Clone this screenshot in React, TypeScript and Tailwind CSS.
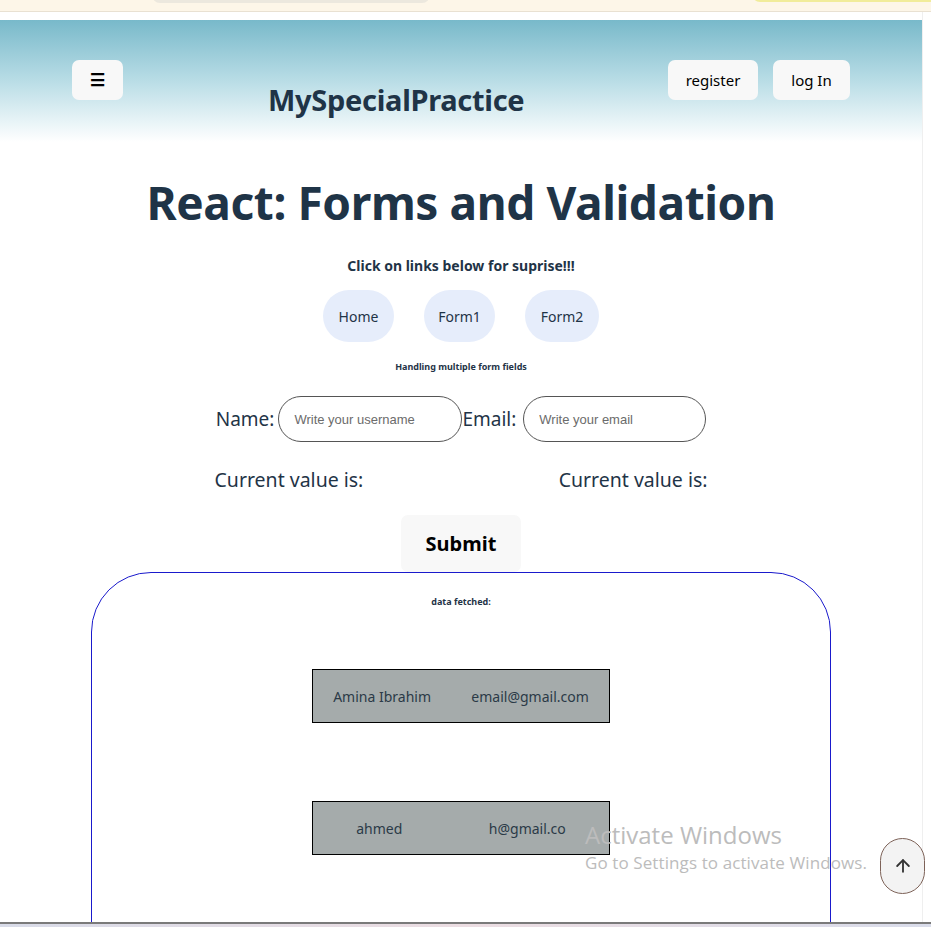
import { ArrowUp } from "lucide-react";

const FONT = "font-['Noto_Sans',_'Open_Sans',_sans-serif]";

const USERS = [
  { name: "Amina Ibrahim", email: "email@gmail.com" },
  { name: "ahmed", email: "h@gmail.co" },
];

export default function App() {
  return (
    <div className={`relative h-[927px] w-[931px] overflow-hidden bg-white ${FONT} text-[#1f3447]`}>
      {/* browser chrome strip */}
      <div className="relative h-[12px] border-b border-[#e9e1d2] bg-[#fdf6e8]">
        <div className="absolute left-[152px] top-[-6px] h-[9px] w-[278px] rounded-b-[8px] bg-[#ece8de]" />
        <div className="absolute left-[752px] top-[-6px] h-[8px] w-[180px] rounded-bl-[8px] bg-[#f1ec9a]" />
      </div>

      <div className="flex">
        <div className="w-[922px] pt-[8px]">
          {/* header */}
          <header className="flex h-[122px] items-start bg-gradient-to-b from-[#78b9ca] via-[#b9dde6] to-white px-[72px] pt-[40px]">
            <button className="flex h-[40px] w-[51px] items-center justify-center rounded-[7px] bg-[#f8f8f8] text-[17px] font-bold text-black">
              ☰
            </button>
            <div className="ml-[145px] mt-[18px] text-[29px] font-bold tracking-[-0.3px]">MySpecialPractice</div>
            <div className="ml-auto flex gap-[15px]">
              <button className="h-[40px] w-[90px] rounded-[7px] bg-[#f8f8f8] text-[15px] text-black">register</button>
              <button className="h-[40px] w-[77px] rounded-[7px] bg-[#f8f8f8] text-[15px] text-black">log In</button>
            </div>
          </header>

          <h1 className="mt-[28px] text-center text-[46px] font-bold leading-[64px] tracking-[-0.4px]">
            React: Forms and Validation
          </h1>

          <p className="mt-[22px] text-center text-[14px] font-bold leading-[20px]">Click on links below for suprise!!!</p>

          <nav className="mt-[14px] flex justify-center gap-[30px]">
            {[
              ["Home", "w-[71px]"],
              ["Form1", "w-[71px]"],
              ["Form2", "w-[74px]"],
            ].map(([label, w]) => (
              <a key={label} className={`flex h-[52px] ${w} items-center justify-center rounded-full bg-[#e6edfb] text-[14px]`}>
                {label}
              </a>
            ))}
          </nav>

          <p className="mt-[18px] text-center text-[9px] font-bold leading-[14px]">Handling multiple form fields</p>

          <form className="mt-[22px] flex flex-col items-center">
            <div className="flex items-center text-[19px]">
              <label>Name:</label>
              <input
                placeholder="Write your username"
                className="ml-[4px] h-[46px] w-[184px] rounded-full border border-[#555] px-[15px] font-['Liberation_Sans',_sans-serif] text-[13px] outline-none placeholder:text-[#6b6b6b]"
              />
              <label>Email:</label>
              <input
                placeholder="Write your email"
                className="ml-[7px] h-[46px] w-[183px] rounded-full border border-[#555] px-[15px] font-['Liberation_Sans',_sans-serif] text-[13px] outline-none placeholder:text-[#6b6b6b]"
              />
            </div>
            <div className="mt-[24px] flex w-[493px] justify-between text-[19.5px] leading-[28px]">
              <span>Current value is:</span>
              <span>Current value is:</span>
            </div>
            <button
              type="button"
              className="mt-[21px] h-[57px] w-[120px] rounded-[7px] bg-[#f8f8f8] text-[20px] font-bold text-black"
            >
              Submit
            </button>
          </form>

          {/* fetched data */}
          <section className="mx-auto h-[400px] w-[740px] rounded-t-[60px] border border-[#1a1acc]">
            <p className="mt-[22px] text-center text-[9px] font-bold leading-[14px]">data fetched:</p>
            <div className="mt-[60px] flex flex-col items-center gap-[78px]">
              {USERS.map((u) => (
                <div
                  key={u.name}
                  className="flex h-[54px] w-[298px] items-center justify-around border border-black bg-[#a5abab] text-[14px] text-[#2b3a47]"
                >
                  <span>{u.name}</span>
                  <span>{u.email}</span>
                </div>
              ))}
            </div>
          </section>
        </div>
        {/* scrollbar track */}
        <div className="w-[9px] border-l border-[#efefef] bg-white" />
      </div>

      {/* windows watermark */}
      <div className="pointer-events-none absolute left-[585px] top-[818px] font-['Open_Sans',_sans-serif] text-[#bcbcbc]">
        <div className="text-[24px] leading-[33px]">Activate Windows</div>
        <div className="text-[17px] leading-[24px] tracking-[0.1px]">Go to Settings to activate Windows.</div>
      </div>

      {/* scroll to top */}
      <button className="absolute left-[880px] top-[838px] flex h-[56px] w-[45px] items-center justify-center rounded-full border border-[#7d6258] bg-[#f3f3f3] text-[#333]">
        <ArrowUp size={20} strokeWidth={2.2} />
      </button>

      {/* taskbar edge */}
      <div className="absolute bottom-0 left-0 h-[5px] w-full border-t-2 border-[#7a7a7a] bg-gradient-to-r from-[#d8dbe8] via-[#ecdde2] to-[#d9dcea]" />
    </div>
  );
}
